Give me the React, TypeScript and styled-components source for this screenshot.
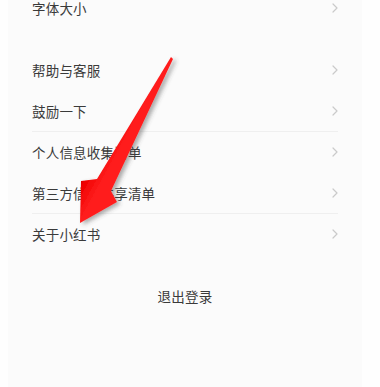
import React from 'react';
import styled, { createGlobalStyle } from 'styled-components';

const GlobalStyle = createGlobalStyle`
  html, body {
    margin: 0;
    padding: 0;
    background: #fefefe;
  }
  body {
    font-family: 'Noto Sans CJK SC', 'Noto Sans', sans-serif;
    overflow: hidden;
  }
`;

type Item = { label: string; divider?: boolean };

const topItems: Item[] = [{ label: '字体大小' }];

// only the dividers that are visible in the capture
const mainItems: Item[] = [
  { label: '帮助与客服' },
  { label: '鼓励一下', divider: true },
  { label: '个人信息收集清单' },
  { label: '第三方信息共享清单', divider: true },
  { label: '关于小红书' },
];

const Chevron = () => (
  <svg width="6" height="10" viewBox="0 0 6 10">
    <polyline
      points="1,1 5,5 1,9"
      fill="none"
      stroke="#cacaca"
      strokeWidth="1.2"
      strokeLinecap="round"
      strokeLinejoin="round"
    />
  </svg>
);

const Arrow = () => (
  <ArrowLayer viewBox="0 0 380 387">
    <defs>
      <linearGradient
        id="arrowFill"
        gradientUnits="userSpaceOnUse"
        x1="92"
        y1="150"
        x2="114"
        y2="162"
      >
        <stop offset="0" stopColor="#b80000" />
        <stop offset="0.35" stopColor="#f00000" />
        <stop offset="1" stopColor="#ff1e1e" />
      </linearGradient>
      <filter id="arrowShadow" x="-20%" y="-20%" width="140%" height="140%">
        <feDropShadow dx="3" dy="2" stdDeviation="2" floodColor="#444" floodOpacity="0.45" />
      </filter>
    </defs>
    <polygon
      points="171,57 173,59 111,191 117,202 80,223 81,181 97,179"
      fill="url(#arrowFill)"
      filter="url(#arrowShadow)"
      strokeLinejoin="round"
    />
  </ArrowLayer>
);

export default function App() {
  return (
    <>
      <GlobalStyle />
      <Page>
        <Panel>
          <Group $offset={-12}>
            {topItems.map((item) => (
              <Row key={item.label}>
                <Label>{item.label}</Label>
                <Chevron />
              </Row>
            ))}
          </Group>
          <Group $offset={21}>
            {mainItems.map((item) => (
              <Row key={item.label} $divider={item.divider}>
                <Label>{item.label}</Label>
                <Chevron />
              </Row>
            ))}
          </Group>
          <Logout>退出登录</Logout>
        </Panel>
        <Arrow />
      </Page>
    </>
  );
}

const Page = styled.div`
  position: relative;
  width: 380px;
  height: 387px;
  overflow: hidden;
  background: #fefefe;
`;

const Panel = styled.div`
  margin: 0 18px 0 8px;
  height: 100%;
  background: #fbfbfb;
  display: flex;
  flex-direction: column;
`;

const Group = styled.div<{ $offset: number }>`
  display: flex;
  flex-direction: column;
  margin-top: ${(p) => p.$offset}px;
`;

const Row = styled.div<{ $divider?: boolean }>`
  height: 41px;
  margin: 0 24px;
  display: flex;
  align-items: center;
  justify-content: space-between;
  box-sizing: border-box;
  border-bottom: 1px solid ${(p) => (p.$divider ? '#efefef' : 'transparent')};
`;

const Label = styled.span`
  font-size: 13.5px;
  color: #3a3a3a;
  letter-spacing: 0.2px;
`;

const Logout = styled.div`
  margin-top: 26px;
  height: 30px;
  display: flex;
  align-items: center;
  justify-content: center;
  font-size: 13.5px;
  color: #3a3a3a;
  letter-spacing: 0.3px;
`;

const ArrowLayer = styled.svg`
  position: absolute;
  inset: 0;
  width: 380px;
  height: 387px;
  pointer-events: none;
`;
